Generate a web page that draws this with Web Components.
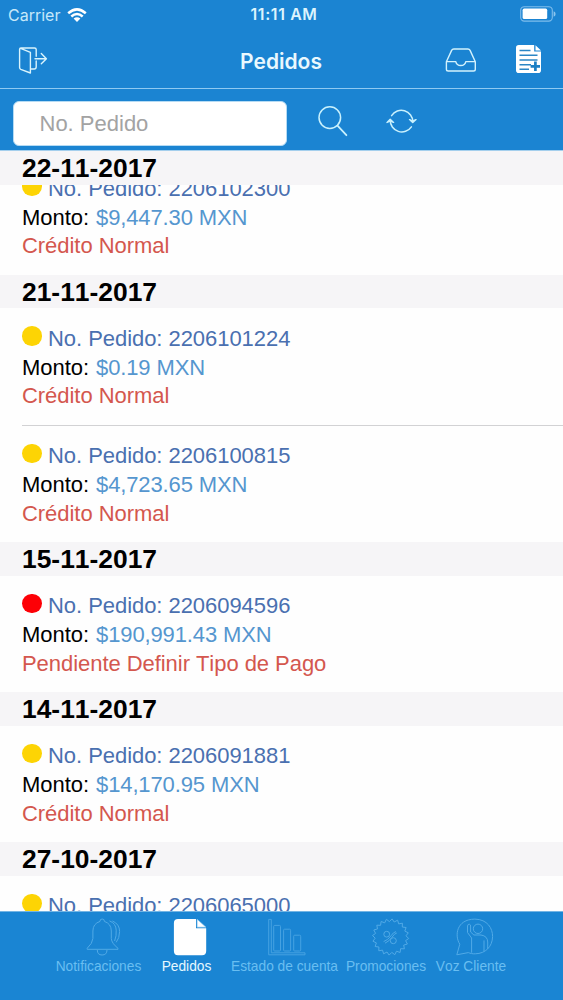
<!DOCTYPE html>
<html lang="es">
<head>
<meta charset="utf-8">
<title>Pedidos</title>
<style>
html,body{margin:0;height:100%;overflow:hidden;background:#fefefe}
body{font-family:"Liberation Sans",Arial,sans-serif;font-kerning:none}
</style>
</head>
<body>
<orders-app></orders-app>
<script>
const define = (name, html, setup) => {
  const tpl = document.createElement('template');
  tpl.innerHTML = html;
  customElements.define(name, class extends HTMLElement {
    constructor() {
      super();
      this.attachShadow({mode: 'open'}).append(tpl.content.cloneNode(true));
    }
    connectedCallback() { if (setup) setup(this, this.shadowRoot); }
  });
};

const ICONS = {
  wifi: ['0 0 20 14', '<g fill="none" stroke="#fff" stroke-width="2.5"><path d="M1.2 5.3Q10-2.6 18.8 5.3"/><path d="M4.3 8.5Q10 3.4 15.7 8.5"/></g><path fill="#fff" d="M6.6 10.6Q10 7.9 13.4 10.6L10 14z"/>'],
  battery: ['0 0 36 16', '<rect x=".7" y=".7" width="31.6" height="14.4" rx="3.6" fill="none" stroke="#7fbdec" stroke-width="1.1"/><rect x="2.6" y="2.6" width="24.6" height="10.4" rx="1.6" fill="#fff"/><path fill="#8cc5ee" d="M33.6 5.2q2 .8 2 2.8t-2 2.8z"/>'],
  exit: ['18 46 30 29', '<g fill="none" stroke="#d9f4fd" stroke-width="1.4" stroke-linejoin="round" stroke-linecap="round"><path d="M20 48.2L30.4 52.3V73L20.8 69.3Q19.6 68.8 19.6 67.5V49.3Q19.6 48 21 48H34.5Q36.2 48 36.2 49.6V56.2M36.2 61V66.8Q36.2 69 34.2 69H31"/><path d="M35 58.7H46.2M41.3 53.6L46.4 58.7L41.3 63.8"/></g>'],
  tray: ['444 46 34 28', '<g fill="none" stroke="#d3f2fd" stroke-width="1.4" stroke-linejoin="round"><path d="M446.4 61.8L451.6 50.4Q452.3 49 453.8 49H467.9Q469.4 49 470.1 50.4L475.3 61.8V69.2Q475.3 71 473.5 71H448.2Q446.4 71 446.4 69.2ZM446.6 61.6H455.8Q456.6 65.5 460.8 65.5T465.8 61.6H475.2"/></g>'],
  note: ['515 44 28 30', '<path fill="#fff" d="M518.8 45H534.2V51.4H541V70.2Q541 73 538.2 73H518.8Q516 73 516 70.2V47.8Q516 45 518.8 45ZM535.5 45.3L541 50.6H535.5Z"/><g stroke="#2b86c5" stroke-width="1.5"><path d="M519.5 50.4H530.5M519.5 55.2H537.5M519.5 60H537.5M519.5 64.8H531M519.5 69.3H529"/></g><path stroke="#1b7fc4" stroke-width="2.7" d="M535.4 61.5V71M530.6 66.3H540"/>'],
  search: ['316 104 33 33', '<g fill="none" stroke="#c9f1fd" stroke-linecap="round"><circle cx="329.8" cy="117.6" r="10.8" stroke-width="1.5"/><path stroke-width="1.8" d="M337.5 125.7L346.4 135.2"/></g>'],
  refresh: ['385 106 34 30', '<g fill="none" stroke="#c9f1fd" stroke-width="1.5" stroke-linecap="round" stroke-linejoin="round"><path d="M391.6 115.6A11.6 11.6 0 0 1 412.9 121.8M411.4 126.8A11.6 11.6 0 0 1 390.2 120"/><path fill="#c9f1fd" stroke-width="1.4" d="M409.5 119.6L412.7 122.6L416.1 119.6L412.7 120.9ZM387 122.4L390.2 119.2L393.6 122.4L390.2 121Z"/></g>'],
  bell: ['84 917 40 41', '<g fill="none" stroke="#51aae7" stroke-width="1"><path d="M100 921.4Q99.8 919 102.2 919T104.4 921.4Q111.3 923.7 111.3 931V938.5Q111.6 943.3 118 948.3V949.3H87.2V948.3Q92.6 943.3 92.9 938.5V931Q92.9 923.7 100 921.4Z"/><path d="M97.3 950Q97.3 955 102.1 955T107 950M109.5 920.9Q116 923.4 116.2 930.2Q116.6 936 114.6 941M112.4 921Q119.6 924 119.6 931.5Q119.5 938.5 116.2 942.3"/></g>'],
  page: ['170 917 40 41', '<path fill="#fff" d="M178 919H196V928.2H206.2V951Q206.2 955.2 202 955.2H178Q173.9 955.2 173.9 951V923.1Q173.9 919 178 919Z"/><path fill="#fff" stroke="#8ac6ef" stroke-width=".6" d="M197.1 919.2L206 927.2H197.1Z"/>'],
  chart: ['266 917 40 41', '<g fill="none" stroke="#46a2e2" stroke-width="1"><path d="M268.7 919.4H271.3V952.8H305V954.8H268.7Z"/><rect x="273.7" y="925.4" width="6.8" height="25.6" rx="1"/><rect x="283.6" y="929.2" width="7" height="21.8" rx="1"/><rect x="293.7" y="935.2" width="7" height="15.8" rx="1"/></g>'],
  promo: ['370 917 40 41', ''],
  voice: ['455 917 40 41', '<g fill="none" stroke="#51aae7" stroke-width="1" stroke-linejoin="round"><path d="M459.8 944.2C454.5 936 456 919.4 474.8 919.1C487.5 919.3 492.7 928.5 492.6 936.6C492.4 946.6 485.5 953.6 475.3 953.8C472.2 954 470.6 953.4 468.3 952.6L456.8 954.8Z"/><circle cx="478" cy="928.8" r="4.7"/><path d="M471.6 952.7V938L467.5 932.5V926Q467.8 924 469.3 924.2Q471 924.4 470.6 927V932L473.9 935H481Q487.6 936 487.7 942V948.8M484 951V940.4"/></g>']
};
/* Notched seal with a percent sign */
{
  let d = '';
  const n = 20;
  for (let i = 0; i < n * 2; i++) {
    const a = i * Math.PI / n + .08, r = i % 2 ? 15.4 : 18.2;
    d += (i ? 'L' : 'M') + (390.6 + r * Math.cos(a)).toFixed(1) + ' ' + (937 + r * Math.sin(a)).toFixed(1);
  }
  ICONS.promo[1] = `<g fill="none" stroke="#51aae7" stroke-width="1"><path d="${d}Z"/><circle cx="386.7" cy="934.2" r="2.9"/><circle cx="393.3" cy="940.7" r="3"/><path d="M383.6 941.6Q388 940 391 935.8Q393.4 932 396 931.6M385 943.2Q389.3 941.2 392 937.3Q394.4 933.4 396.8 933"/></g>`;
}

define('ui-icon', `<style>:host{display:block;flex:none}svg{display:block}</style><svg xmlns="http://www.w3.org/2000/svg"></svg>`, (el, root) => {
  const icon = ICONS[el.getAttribute('name')];
  if (!icon) return;
  const svg = root.querySelector('svg'), [, , w, h] = icon[0].split(' ');
  svg.setAttribute('viewBox', icon[0]);
  svg.setAttribute('width', w);
  svg.setAttribute('height', h);
  svg.innerHTML = icon[1];
});

define('status-bar', `<style>
:host{display:grid;grid-template-columns:1fr auto 1fr;align-items:center;height:29px;padding:0 7px 0 8px;box-sizing:border-box;color:#e2f6fd;font:400 16px Inter,sans-serif}
.l{display:flex;align-items:center;gap:7px;color:#c5e8fa}
.t{font-weight:600;font-size:15.8px;letter-spacing:.65px;padding-left:4px;color:#dcf4fd}
.r{display:flex;justify-content:flex-end;margin-top:-1px}
</style><div class="l"><span>Carrier</span><ui-icon name="wifi"></ui-icon></div><div class="t">11:11 AM</div><div class="r"><ui-icon name="battery"></ui-icon></div>`);

define('nav-bar', `<style>
:host{display:grid;grid-template-columns:1fr auto 1fr;align-items:center;height:60px;padding:3.5px 20px 0 18px;box-sizing:border-box;border-bottom:1.5px solid #8fcaf2}
h1{margin:0;padding:2.5px 0 0 1px;color:#e9f8fe;font:600 21px Inter,sans-serif}
.r{display:flex;justify-content:flex-end;align-items:center;gap:37px}
.r ui-icon:last-child{margin-top:-2px}
</style><div><ui-icon name="exit"></ui-icon></div><h1><slot></slot></h1><div class="r"><ui-icon name="tray"></ui-icon><ui-icon name="note"></ui-icon></div>`);

define('search-bar', `<style>
:host{display:flex;align-items:flex-start;height:62px;padding:12px 0 0 13px;box-sizing:border-box;border-bottom:1.5px solid #a5cfed}
.f{width:274px;height:45px;box-sizing:border-box;border:1px solid #b5dbf4;border-radius:6px;background:#fff;color:#a3a3a3;font-size:22px;line-height:43px;padding-left:25.5px;margin-right:29px}
.s{margin:3px 36px 0 0}
.s+ui-icon{margin-top:5px}
</style><div class="f"><slot></slot></div><ui-icon class="s" name="search"></ui-icon><ui-icon name="refresh"></ui-icon>`);

define('date-header', `<style>
:host{display:block;height:33.5px;box-sizing:border-box;padding-left:22px;background:#f6f5f7;color:#000;font-weight:700;font-size:26.4px;line-height:35.4px}
</style><slot></slot>`);

define('order-row', `<style>
:host{display:block;height:116.5px;box-sizing:border-box;padding:16.8px 0 0 22px;font-size:22px;line-height:28.7px;letter-spacing:-.05px;white-space:nowrap}
:host([divided]){height:117.5px}
.n{display:flex;color:#4a70b0}
i{width:19.5px;height:19.5px;border-radius:50%;background:var(--dot,#fdd404);margin:1.7px 6.5px 0 0}
.m{color:#000}.m span{color:#5596cf;margin-left:1px;letter-spacing:-.12px}
.s{color:#d4574e}
hr{border:0;height:1px;background:#d2d2d4;margin:14px 0 0}
:host(:not([divided])) hr{display:none}
</style><div class="n"><i></i><span>No. Pedido: <slot name="id"></slot></span></div><div class="m">Monto: <span><slot name="amount"></slot></span></div><div class="s"><slot></slot></div><hr>`);

define('tab-item', `<style>
:host{display:flex;flex-direction:column;align-items:center;padding-top:5px;color:#69bef1;font-size:13.75px;line-height:17px;white-space:nowrap}
:host([active]){color:#e6f8ff}
ui-icon{margin:0 0 0 var(--shift,8px)}
</style><ui-icon></ui-icon><slot></slot>`, (el, root) => {
  const icon = document.createElement('ui-icon');
  icon.setAttribute('name', el.getAttribute('icon'));
  root.querySelector('ui-icon').replaceWith(icon);
});

define('tab-bar', `<style>
:host{display:grid;grid-template-columns:88px 88px 108px 95px 75px;height:89.5px;box-sizing:border-box;padding-left:54.5px;border-top:1px solid #74b5e4;background:#1a85d3}
</style><slot></slot>`);

const ORDERS = [
  ['22-11-2017', [['2206102300', '$9,447.30 MXN', 'Crédito Normal']]],
  ['21-11-2017', [['2206101224', '$0.19 MXN', 'Crédito Normal'], ['2206100815', '$4,723.65 MXN', 'Crédito Normal']]],
  ['15-11-2017', [['2206094596', '$190,991.43 MXN', 'Pendiente Definir Tipo de Pago', '#fd0006']]],
  ['14-11-2017', [['2206091881', '$14,170.95 MXN', 'Crédito Normal']]],
  ['27-10-2017', [['2206065000', '', '']]]
];
const row = ([id, amount, state, dot], last) => `<order-row${last ? '' : ' divided'}${dot ? ` style="--dot:${dot}"` : ''}><span slot="id">${id}</span>${amount ? `<span slot="amount">${amount}</span>` : ''}${state}</order-row>`;

define('order-list', `<style>
:host{display:flex;flex-direction:column;overflow:hidden;background:#fefefe}
.clip{flex:1;min-height:0;overflow:hidden}
.scroll{margin-top:-27px}
.pin{flex:none;height:34px}
</style><date-header class="pin">${ORDERS[0][0]}</date-header><div class="clip"><div class="scroll">${
  ORDERS.map(([date, rows], i) => (i ? `<date-header>${date}</date-header>` : '') + rows.map((r, j) => row(r, j === rows.length - 1)).join('')).join('')
}</div></div>`);

define('orders-app', `<style>
:host{display:flex;flex-direction:column;width:563px;height:1000px}
.top{flex:none;background:#1b84d2}
order-list{flex:1;min-height:0}
tab-bar{flex:none}
</style>
<div class="top"><status-bar></status-bar><nav-bar>Pedidos</nav-bar><search-bar>No. Pedido</search-bar></div>
<order-list></order-list>
<tab-bar>
<tab-item icon="bell" style="--shift:10px">Notificaciones</tab-item>
<tab-item icon="page" active style="--shift:7px">Pedidos</tab-item>
<tab-item icon="chart" style="--shift:3px">Estado de cuenta</tab-item>
<tab-item icon="promo" style="--shift:7px">Promociones</tab-item>
<tab-item icon="voice">Voz Cliente</tab-item>
</tab-bar>`);
</script>
</body>
</html>
